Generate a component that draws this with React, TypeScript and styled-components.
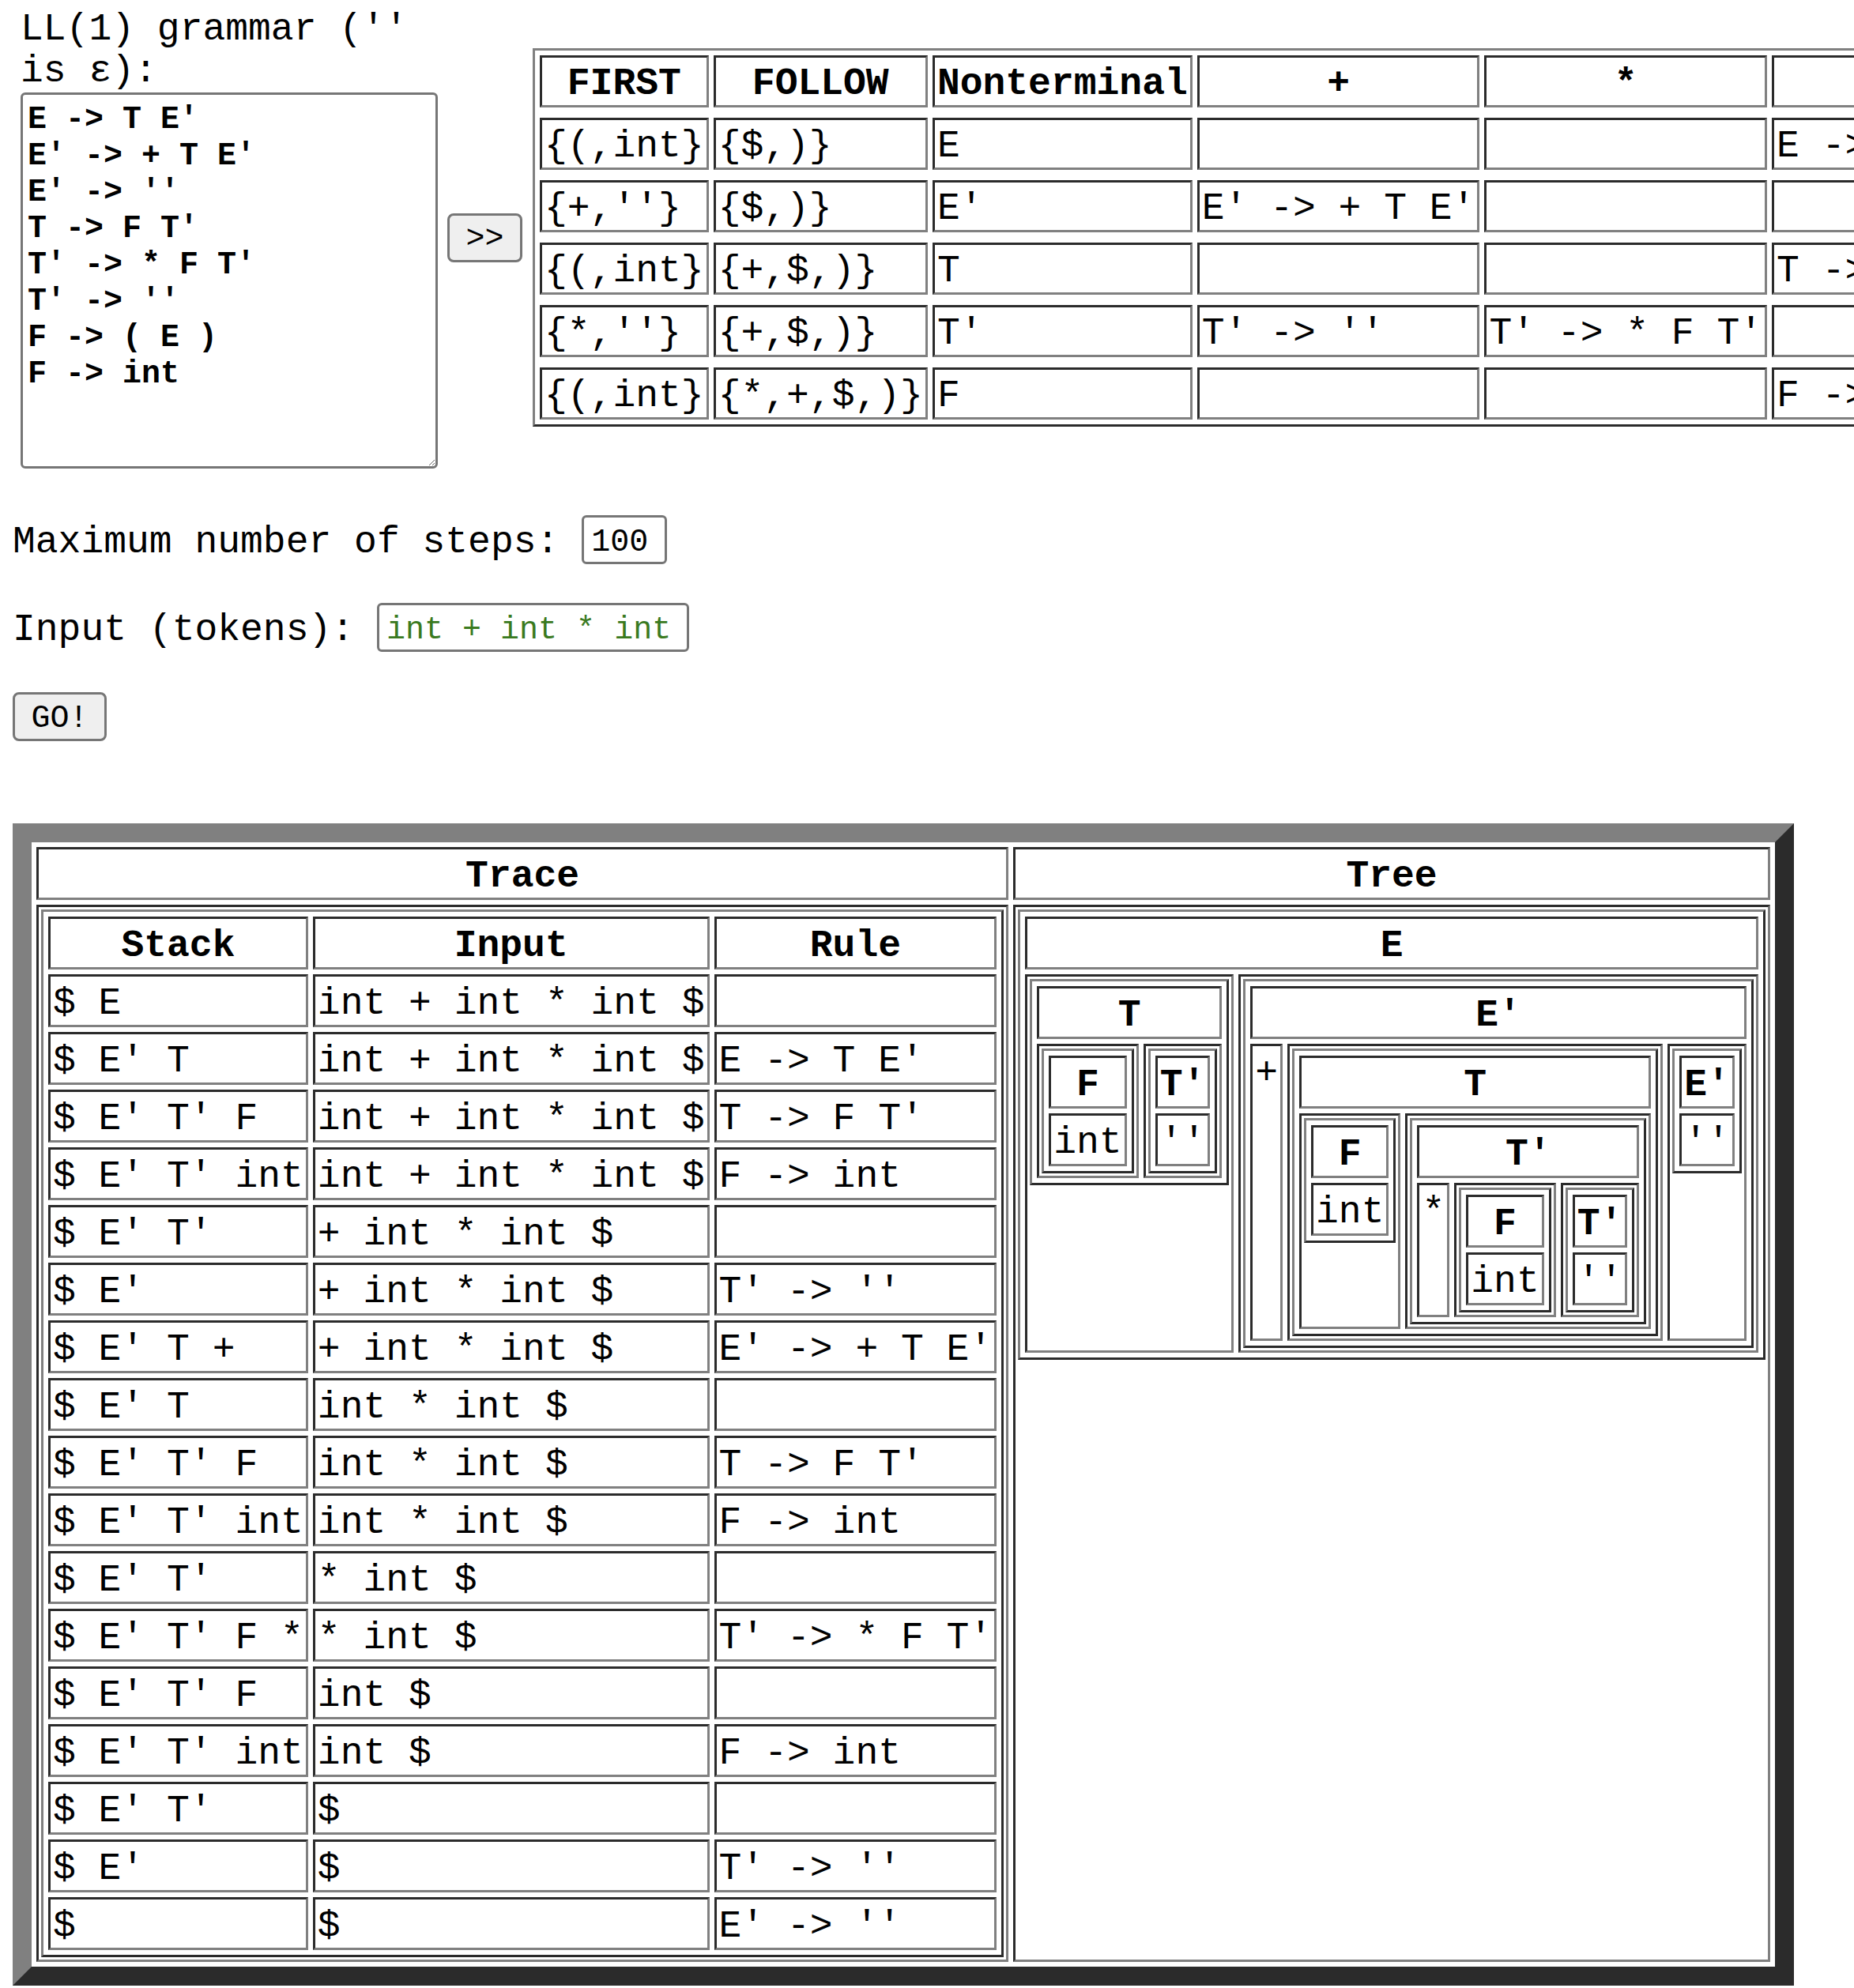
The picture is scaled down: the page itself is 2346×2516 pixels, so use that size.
import React from 'react'
import styled, { createGlobalStyle } from 'styled-components'

const GlobalStyle = createGlobalStyle`
	html, body {
		margin: 0;
		padding: 0;
		background: #fff;
		overflow: hidden;
	}

	body {
		font-family: "Liberation Mono", "Courier New", monospace;
		font-size: 48px;
		color: #000;
	}
`

const Page = styled.div`
	padding: 8px 0 0 16px;
`

const TopRow = styled.div`
	display: flex;
	align-items: center;
`

const GrammarColumn = styled.div`
	flex: 0 0 528px;
	margin-left: 10px;
`

const GrammarLabel = styled.label`
	display: block;
	padding-top: 3px;
	line-height: 53px;
`

const GrammarBox = styled.textarea`
	display: block;
	box-sizing: border-box;
	width: 528px;
	height: 476px;
	margin: 0;
	padding: 9px 6px 3px;
	border: 3px solid #767676;
	border-radius: 6px;
	font-family: "Liberation Mono", "Courier New", monospace;
	font-size: 40px;
	font-weight: bold;
	line-height: 46px;
	color: #000;
	overflow: hidden;
`

const Button = styled.button`
	box-sizing: border-box;
	height: 62px;
	padding: 4px 18px 0;
	background: #efefef;
	border: 3px solid #767676;
	border-radius: 8px;
	font-family: "Liberation Mono", "Courier New", monospace;
	font-size: 40px;
	color: #000;
	cursor: pointer;
`

const ArrowButton = styled(Button)`
	flex: 0 0 auto;
	width: 95px;
	margin-left: 12px;
	padding: 3px 0 0;
`

const GoButton = styled(Button)`
	display: block;
	width: 119px;
	margin-top: 51px;
`

const FieldRow = styled.label<{ $top: number }>`
	display: flex;
	align-items: center;
	height: 62px;
	margin-top: ${p => p.$top}px;
	white-space: pre;
`

const FieldLabel = styled.span`
	padding-top: 6px;
`

const TextField = styled.input<{ $width: number, $color?: string }>`
	box-sizing: border-box;
	width: ${p => p.$width}px;
	height: 62px;
	margin: 0 0 0 29px;
	padding: 6px 9px 0;
	border: 3px solid #767676;
	border-radius: 6px;
	font-family: "Liberation Mono", "Courier New", monospace;
	font-size: 40px;
	color: ${p => p.$color || '#000'};
`

// border="1" look: outset table, inset cells
const BorderTable = styled.table`
	border-collapse: separate;
	border-spacing: 6px;
	border: 3px solid;
	border-color: #808080 #2b2b2b #2b2b2b #808080;
	line-height: 54px;
	font-size: 48px;
`

const ParseTable = styled(BorderTable)`
	flex: 0 0 auto;
	margin-left: 13px;
	line-height: 53px;
`

const ResultTable = styled(BorderTable)`
	margin-top: 104px;
	border-width: 24px;
`

const Head = styled.th`
	border: 3px solid;
	border-color: #2b2b2b #808080 #808080 #2b2b2b;
	padding: 7px 3px 0;
	font-weight: bold;
	text-align: center;
	white-space: nowrap;
`

const Cell = styled.td`
	border: 3px solid;
	border-color: #2b2b2b #808080 #808080 #2b2b2b;
	padding: 7px 3px 0;
	text-align: left;
	vertical-align: top;
	white-space: nowrap;
`

const TreeCell = styled(Cell)`
	padding: 3px;
`

const Spacer = styled.td`
	height: 1px;
	padding: 0;
	border: none;
	line-height: 0;
	font-size: 0;
`

const grammar = `E -> T E'
E' -> + T E'
E' -> ''
T -> F T'
T' -> * F T'
T' -> ''
F -> ( E )
F -> int`

const parseHead = ['FIRST', 'FOLLOW', 'Nonterminal', '+', '*', '(', ')', 'int', '$']

const parseRows = [
	['{(,int}', '{$,)}', 'E', '', '', "E -> T E'", '', "E -> T E'", ''],
	["{+,''}", '{$,)}', "E'", "E' -> + T E'", '', '', "E' -> ''", '', "E' -> ''"],
	['{(,int}', '{+,$,)}', 'T', '', '', "T -> F T'", '', "T -> F T'", ''],
	["{*,''}", '{+,$,)}', "T'", "T' -> ''", "T' -> * F T'", '', "T' -> ''", '', "T' -> ''"],
	['{(,int}', '{*,+,$,)}', 'F', '', '', 'F -> ( E )', '', 'F -> int', ''],
]

const trace = [
	['$ E', 'int + int * int $', ''],
	["$ E' T", 'int + int * int $', "E -> T E'"],
	["$ E' T' F", 'int + int * int $', "T -> F T'"],
	["$ E' T' int", 'int + int * int $', 'F -> int'],
	["$ E' T'", '+ int * int $', ''],
	["$ E'", '+ int * int $', "T' -> ''"],
	["$ E' T +", '+ int * int $', "E' -> + T E'"],
	["$ E' T", 'int * int $', ''],
	["$ E' T' F", 'int * int $', "T -> F T'"],
	["$ E' T' int", 'int * int $', 'F -> int'],
	["$ E' T'", '* int $', ''],
	["$ E' T' F *", '* int $', "T' -> * F T'"],
	["$ E' T' F", 'int $', ''],
	["$ E' T' int", 'int $', 'F -> int'],
	["$ E' T'", '$', ''],
	["$ E'", '$', "T' -> ''"],
	['$', '$', "E' -> ''"],
]

interface TreeNode {
	name: string
	kids: (TreeNode | string)[]
}

const tree: TreeNode = {
	name: 'E',
	kids: [
		{ name: 'T', kids: [{ name: 'F', kids: ['int'] }, { name: "T'", kids: ["''"] }] },
		{
			name: "E'",
			kids: [
				'+',
				{
					name: 'T',
					kids: [
						{ name: 'F', kids: ['int'] },
						{ name: "T'", kids: ['*', { name: 'F', kids: ['int'] }, { name: "T'", kids: ["''"] }] },
					],
				},
				{ name: "E'", kids: ["''"] },
			],
		},
	],
}

const Subtree: React.FC<{ node: TreeNode }> = ({ node }) => (
	<BorderTable>
		<tbody>
			<tr><Head colSpan={node.kids.length}>{node.name}</Head></tr>
			<tr>
				{node.kids.map((kid, i) => typeof kid === 'string'
					? <Cell key={i}>{kid}</Cell>
					: <TreeCell key={i}><Subtree node={kid} /></TreeCell>
				)}
			</tr>
		</tbody>
	</BorderTable>
)

export default function App() {
	return (
		<Page>
			<GlobalStyle />
			<TopRow>
				<GrammarColumn>
					<GrammarLabel htmlFor='grammar'>LL(1) grammar ('' is ε):</GrammarLabel>
					<GrammarBox id='grammar' defaultValue={grammar} spellCheck={false} />
				</GrammarColumn>
				<ArrowButton>&gt;&gt;</ArrowButton>
				<ParseTable>
					<tbody>
						<tr>{parseHead.map(h => <Head key={h}>{h}</Head>)}</tr>
						{parseRows.map((row, r) => (
							<React.Fragment key={r}>
								<tr><Spacer colSpan={parseHead.length} /></tr>
								<tr>{row.map((c, i) => <Cell key={i}>{c}</Cell>)}</tr>
							</React.Fragment>
						))}
					</tbody>
				</ParseTable>
			</TopRow>

			<FieldRow $top={59}>
				<FieldLabel>Maximum number of steps:</FieldLabel>
				<TextField $width={108} defaultValue='100' />
			</FieldRow>
			<FieldRow $top={49}>
				<FieldLabel>Input (tokens):</FieldLabel>
				<TextField $width={395} $color='#3a7a1f' defaultValue='int + int * int' />
			</FieldRow>
			<GoButton>GO!</GoButton>

			<ResultTable>
				<tbody>
					<tr>
						<Head>Trace</Head>
						<Head>Tree</Head>
					</tr>
					<tr>
						<TreeCell>
							<BorderTable>
								<tbody>
									<tr>
										<Head>Stack</Head>
										<Head>Input</Head>
										<Head>Rule</Head>
									</tr>
									{trace.map((row, r) => (
										<tr key={r}>{row.map((c, i) => <Cell key={i}>{c}</Cell>)}</tr>
									))}
								</tbody>
							</BorderTable>
						</TreeCell>
						<TreeCell>
							<Subtree node={tree} />
						</TreeCell>
					</tr>
				</tbody>
			</ResultTable>
		</Page>
	)
}
